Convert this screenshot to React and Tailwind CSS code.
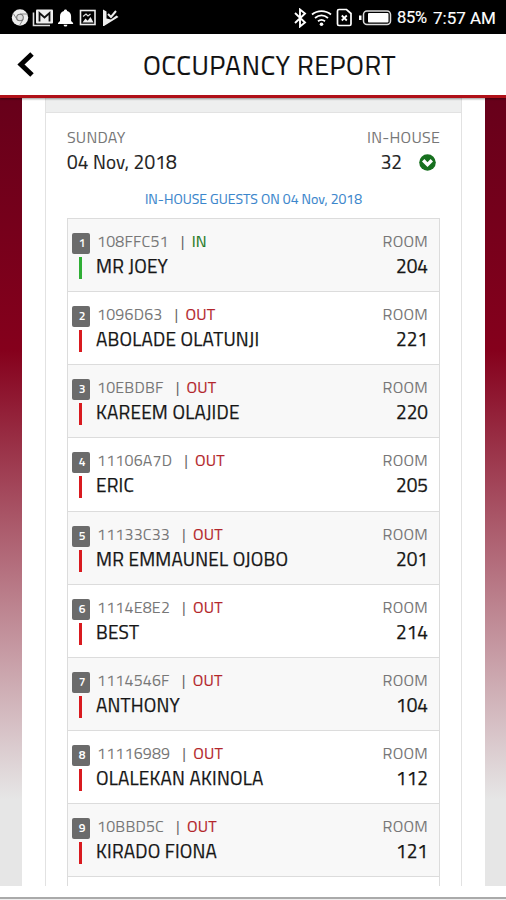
import React from 'react';

const guests = [
  { id: '108FFC51', status: 'IN', name: 'MR JOEY', room: '204' },
  { id: '1096D63', status: 'OUT', name: 'ABOLADE OLATUNJI', room: '221' },
  { id: '10EBDBF', status: 'OUT', name: 'KAREEM OLAJIDE', room: '220' },
  { id: '11106A7D', status: 'OUT', name: 'ERIC', room: '205' },
  { id: '11133C33', status: 'OUT', name: 'MR EMMAUNEL OJOBO', room: '201' },
  { id: '1114E8E2', status: 'OUT', name: 'BEST', room: '214' },
  { id: '1114546F', status: 'OUT', name: 'ANTHONY', room: '104' },
  { id: '11116989', status: 'OUT', name: 'OLALEKAN AKINOLA', room: '112' },
  { id: '10BBD5C', status: 'OUT', name: 'KIRADO FIONA', room: '121' },
];

const StatusBar = () => (
  <div className="flex h-[34px] shrink-0 items-center bg-black pt-px font-[Roboto,sans-serif] text-white">
    <svg className="ml-[11px]" width="110" height="20" viewBox="0 0 110 20">
      {/* chrome */}
      <circle cx="9" cy="9.5" r="8.2" fill="#eee" />
      <path d="M9 6h7.5M6 11.500L2.300 5.500M12 11.500L8.500 17.500" fill="none" stroke="#888" strokeWidth="1" />
      <circle cx="9" cy="9.5" r="3.300" fill="#ddd" stroke="#777" strokeWidth="1.100" />
      {/* gmail */}
      <path d="M22.500 4.500v13H39" fill="none" stroke="#ddd" strokeWidth="1.600" />
      <rect x="25" y="1.500" width="17" height="14" rx="1" fill="#eee" />
      <path d="M28.500 13.500V5l5 4.500 5-4.500v8.500" fill="none" stroke="#111" strokeWidth="1.800" />
      {/* bell */}
      <path d="M54.500 1.500c1 0 1.600.7 1.600 1.600 2.700.7 4 2.900 4 5.400v4.500l2 2v1H47v-1l2-2V8.500c0-2.500 1.300-4.700 3.900-5.400 0-.9.600-1.600 1.600-1.600zM52.600 16.700h3.800a1.900 1.900 0 0 1-3.800 0z" fill="#fff" />
      {/* picture */}
      <rect x="69.500" y="2.500" width="14.500" height="14" fill="none" stroke="#eee" strokeWidth="1.600" />
      <path d="M71.500 14.500l3-4 2.200 2.300 2.800-3.800 3 5.500z" fill="#eee" />
      <path d="M72 8.500l3-2.500 2 2 2.500-2" fill="none" stroke="#ddd" strokeWidth="1.200" />
      {/* play check */}
      <path d="M92 1.500l3.500 2v7l4.500 1 5.500-4 2 1.500L93 18h-1z" fill="#eee" />
      <path d="M97 6l3 3 5-6" fill="none" stroke="#eee" strokeWidth="2" />
    </svg>
    <svg className="ml-auto" width="100" height="20" viewBox="0 0 100 20">
      {/* bluetooth */}
      <path d="M2 5l10 9.500-5 4V1.500l5 4L2 15" fill="none" stroke="#fff" strokeWidth="1.900" />
      {/* wifi */}
      <path d="M19 6.500c5.500-4.500 13.500-4.500 19 0M22 10c4-3.300 9-3.300 13 0M25 13.300c2.300-1.800 4.700-1.800 7 0" fill="none" stroke="#fff" strokeWidth="1.800" />
      <circle cx="28.500" cy="16.200" r="1.800" fill="#fff" />
      {/* sim */}
      <path d="M46 1.500h7.500l4.500 4V16a1.500 1.500 0 0 1-1.500 1.500H46A1.500 1.500 0 0 1 44.500 16V3A1.500 1.500 0 0 1 46 1.500z" fill="none" stroke="#fff" strokeWidth="1.700" />
      <path d="M48.800 7.500l5 5M53.800 7.500l-5 5" stroke="#fff" strokeWidth="1.800" />
      {/* battery */}
      <rect x="66" y="7.500" width="2.500" height="4.500" fill="#fff" />
      <rect x="70.500" y="3" width="27" height="13.500" rx="3.500" fill="none" stroke="#ddd" strokeWidth="1.500" />
      <rect x="75" y="5" width="20.500" height="9.500" rx="1" fill="#fff" />
    </svg>
    <span className="ml-[4px] w-[31px] text-[16.500px] leading-[20px] tracking-[-0.300px] whitespace-nowrap [-webkit-text-stroke:0.150px_currentColor]">85%</span>
    <span className="mr-[11px] ml-[5px] w-[62px] text-[17px] leading-[20px] whitespace-nowrap [-webkit-text-stroke:0.150px_currentColor]">7:57 AM</span>
  </div>
);

const Header = () => (
  <header className="relative z-10 flex h-[64px] shrink-0 items-center border-b-[3px] border-[#b01018] bg-white shadow-[0_1px_2px_rgba(0,0,0,0.4)]">
    <svg className="ml-[17px]" width="18" height="26" viewBox="0 0 18 26">
      <path d="M15 2L4 12.500l11 10.500" fill="none" stroke="#000" strokeWidth="5" />
    </svg>
    <h1 className="ml-[108px] text-[27px] leading-[32px] tracking-[0.500px] whitespace-nowrap text-[#111] [-webkit-text-stroke:0.150px_currentColor]">
      OCCUPANCY REPORT
    </h1>
  </header>
);

const GuestRow = ({ guest, index }) => {
  const isIn = guest.status === 'IN';
  return (
    <li className="flex h-[73.150px] border-b border-[#dcdcdc] pr-[11px] pl-[4px] odd:bg-[#f8f8f8] even:bg-white">
      <div className="flex w-[18px] flex-col items-center pt-[14px]">
        <span className="h-[21px] w-[18px] rounded-[2px] bg-[#6b6b6b] pl-[2px] text-center text-[12px] leading-[20px] font-semibold text-white">
          {index + 1}
        </span>
        <span className={`mt-[3px] mr-[1px] h-[22px] w-[2.500px] ${isIn ? 'bg-[#2fae35]' : 'bg-[#d91a1f]'}`} />
      </div>
      <div className="flex-1 pt-[12px] pl-[6px] whitespace-nowrap">
        <div className="flex pl-[1px] text-[16px] leading-[20px] tracking-[0.200px] text-[#777]">
          <span>{guest.id}</span>
          <span className="ml-[12px] text-[#666]">|</span>
          <span className={`ml-[7px] [-webkit-text-stroke:0.150px_currentColor] ${isIn ? 'text-[#1f7a27]' : 'text-[#b3262b]'}`}>{guest.status}</span>
        </div>
        <div className="mt-[3px] text-[19px] leading-[24px] tracking-[0.200px] text-[#151515] [-webkit-text-stroke:0.250px_currentColor]">{guest.name}</div>
      </div>
      <div className="pt-[12px] text-right">
        <div className="text-[16px] leading-[20px] tracking-[0.250px] text-[#777]">ROOM</div>
        <div className="mt-[3px] text-[19px] leading-[24px] text-[#151515] [-webkit-text-stroke:0.250px_currentColor]">{guest.room}</div>
      </div>
    </li>
  );
};

export default function App() {
  return (
    <div className="flex h-[900px] w-[506px] flex-col overflow-hidden bg-white font-['Titillium_Web',Roboto,sans-serif]">
      <StatusBar />
      <Header />
      <main className="flex h-[788px] shrink-0 overflow-hidden bg-[linear-gradient(to_bottom,#67001a_0%,#85001c_32%,#e6e6e6_89%)] pl-[22px]">
        <div className="w-[463px] bg-white px-[23px]">
          <div className="h-full border-x border-[#e2e2e2]">
            <div className="h-[15px] border-b border-[#e2e2e2] bg-[#eeefef]" />
            <div className="flex justify-between px-[21px] pt-[14px] whitespace-nowrap">
              <div>
                <div className="text-[16px] leading-[20px] tracking-[0.200px] text-[#777]">SUNDAY</div>
                <div className="mt-[3px] text-[19px] leading-[24px] tracking-[0.200px] text-[#222] [-webkit-text-stroke:0.150px_currentColor]">04 Nov, 2018</div>
              </div>
              <div className="text-right">
                <div className="text-[16px] leading-[20px] tracking-[0.250px] text-[#777]">IN-HOUSE</div>
                <div className="mt-[3px] flex items-center justify-end pr-[4px] text-[19px] leading-[24px] text-[#222]">
                  <span className="[-webkit-text-stroke:0.150px_currentColor]">32</span>
                  <svg className="ml-[17px]" width="17" height="17" viewBox="0 0 17 17">
                    <circle cx="8.500" cy="8.500" r="8.300" fill="#17701f" />
                    <path d="M4.200 6.300l4.300 4.300 4.300-4.300" fill="none" stroke="#fff" strokeWidth="3.400" />
                  </svg>
                </div>
              </div>
            </div>
            <p className="mt-[16px] text-center text-[14px] leading-[18px] whitespace-nowrap text-[#3b86cc] [-webkit-text-stroke:0.100px_currentColor]">
              IN-HOUSE GUESTS ON 04 Nov, 2018
            </p>
            <ul className="mx-[21px] mt-[10px] border-x border-t border-[#dcdcdc]">
              {guests.map((guest, index) => (
                <GuestRow key={guest.id} guest={guest} index={index} />
              ))}
              <li className="h-[20px] bg-white" />
            </ul>
          </div>
        </div>
      </main>
      <div className="mt-[11px] h-[2px] shrink-0 bg-[#aaa]" />
      <div className="h-px shrink-0 bg-[#eee]" />
    </div>
  );
}
